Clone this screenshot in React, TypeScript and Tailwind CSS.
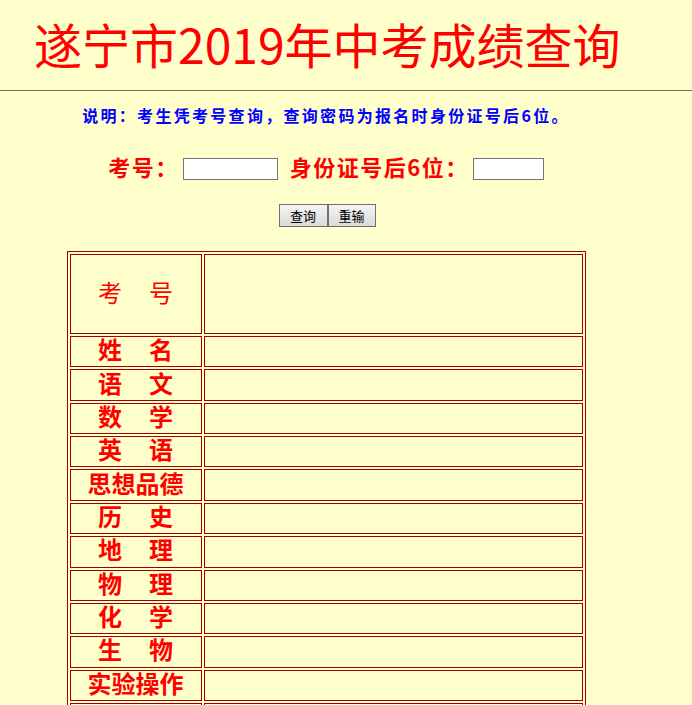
const subjects = [
  ["姓", "名"],
  ["语", "文"],
  ["数", "学"],
  ["英", "语"],
  ["思想品德"],
  ["历", "史"],
  ["地", "理"],
  ["物", "理"],
  ["化", "学"],
  ["生", "物"],
  ["实验操作"],
  [],
];

const Label = ({ parts, bold = true }: { parts: string[]; bold?: boolean }) => (
  <div className={`flex h-full items-center justify-center pb-[5px] text-[24px] leading-none text-[#ff0000] ${bold ? "font-bold" : "font-normal"}`}>
    {parts.length === 1 ? (
      <span>{parts[0]}</span>
    ) : parts.length === 2 ? (
      <div className="flex gap-[27px]">
        <span>{parts[0]}</span>
        <span>{parts[1]}</span>
      </div>
    ) : null}
  </div>
);

const App = () => {
  return (
    <div className="min-h-screen overflow-hidden bg-[#ffffcc]" style={{ fontFamily: '"Noto Sans CJK SC", "Noto Sans", sans-serif' }}>
      <div className="h-[90px] pl-[34px] pt-[19px]">
        <h1 className="text-[48px] font-normal leading-[48px] text-[#ff0000]">遂宁市2019年中考成绩查询</h1>
      </div>
      <div className="h-px w-full bg-[#6f6f6f]" />

      <div className="flex w-[652px] flex-col items-center">
        <p className="mt-[14px] text-[16px] font-bold leading-[20px] tracking-[2.3px] text-[#0000ff]">
          说明：考生凭考号查询，查询密码为报名时身份证号后6位。
        </p>

        <form className="mt-[33px] flex h-[22px] items-center text-[22px] font-bold tracking-[1.5px] text-[#ff0000]">
          <span className="-mt-[6px]">考号：</span>
          <input type="text" name="kh" className="ml-[4px] h-[22px] w-[95px] border border-[#767676] bg-white outline-none" />
          <span className="-mt-[6px] ml-[12px]">身份证号后6位：</span>
          <input type="text" name="sfz" className="ml-[4px] h-[22px] w-[71px] border border-[#767676] bg-white outline-none" />
        </form>

        <div className="mt-[24px] flex h-[23px] pl-[2px]">
          <button type="button" className="h-[23px] w-[49px] border border-[#707070] bg-linear-to-b from-[#f5f5f5] to-[#dadada] text-[13px] leading-none text-black">
            查询
          </button>
          <button type="button" className="h-[23px] w-[48px] border border-[#707070] bg-linear-to-b from-[#f5f5f5] to-[#dadada] text-[13px] leading-none text-black">
            重输
          </button>
        </div>

        <div className="mt-[24px] flex w-[519px] flex-col gap-[2px] border border-[#a00000] p-[2px]">
          <div className="grid h-[80px] grid-cols-[132px_1fr] gap-[2px]">
            <div className="border border-[#a00000]">
              <Label parts={["考", "号"]} bold={false} />
            </div>
            <div className="border border-[#a00000]" />
          </div>
          {subjects.map((s, i) => (
            <div key={i} className="grid h-[31.36px] grid-cols-[132px_1fr] gap-[2px]">
              <div className="border border-[#a00000]">
                <Label parts={s} />
              </div>
              <div className="border border-[#a00000]" />
            </div>
          ))}
        </div>
      </div>
    </div>
  );
};

export default App;
